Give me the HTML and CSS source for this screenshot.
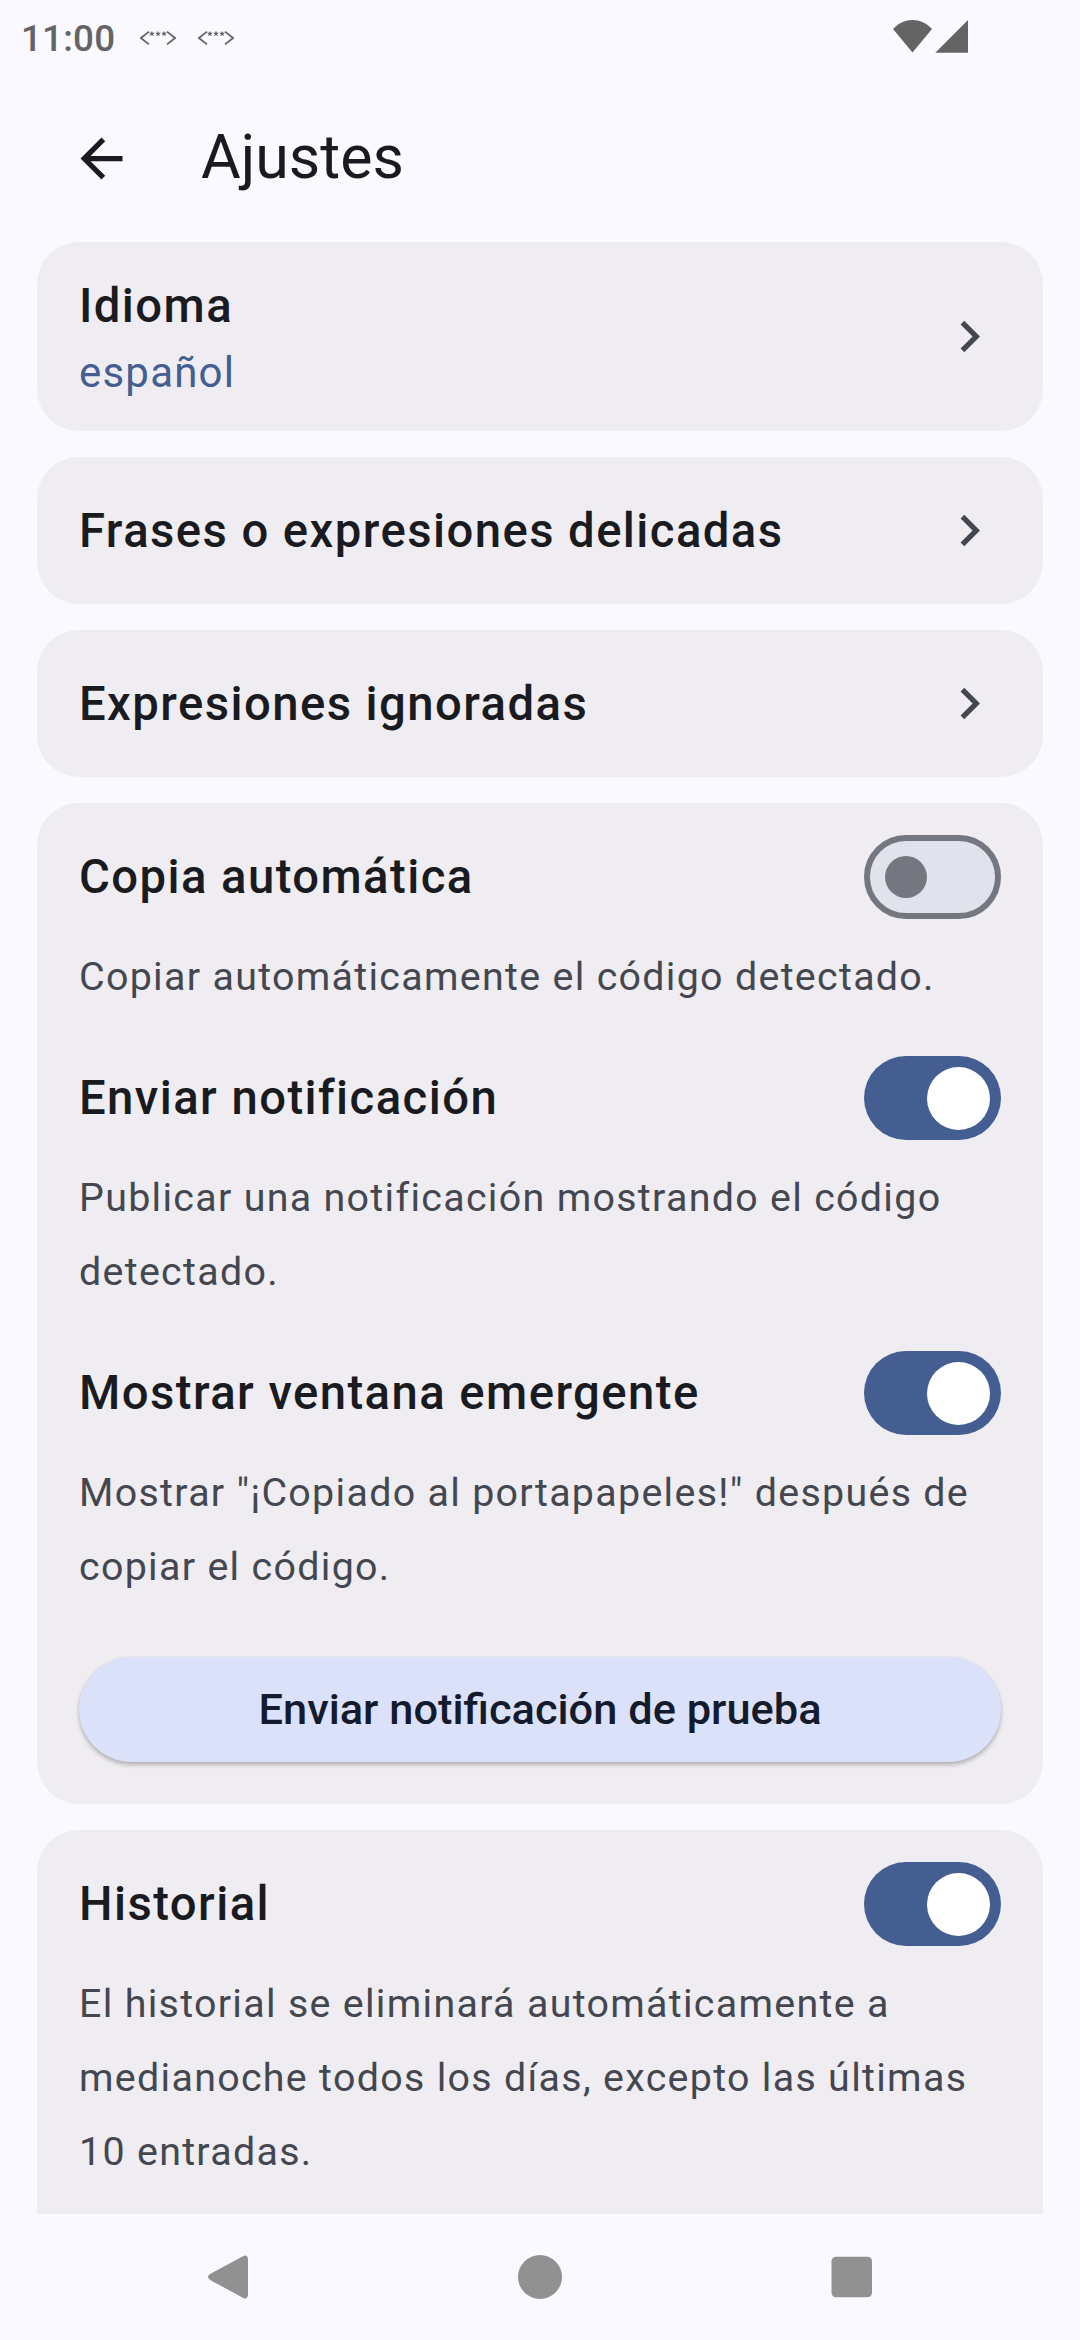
FILE: index.html
```html
<!DOCTYPE html>
<html lang="es">
<head>
<meta charset="utf-8">
<title>Ajustes</title>
<link rel="stylesheet" href="styles.css">
</head>
<body>
<svg class="defs" aria-hidden="true">
  <symbol id="chevron" viewBox="0 0 24 24"><path d="M10 6 8.59 7.41 13.17 12l-4.58 4.59L10 18l6-6z"/></symbol>
  <symbol id="star" viewBox="-10 -10 20 20"><path d="M0-10 2.6-3.2 9.5-3.1 4.1 1.3 5.9 8.1 0 4.2-5.9 8.1-4.1 1.3-9.5-3.1-2.6-3.2z"/></symbol>
  <symbol id="code" viewBox="0 0 36 14">
    <path d="M9 .7.9 7 9 13.3M27 .7 35.1 7 27 13.3" fill="none" stroke="currentColor" stroke-width="1.7"/>
    <use href="#star" x="8.900" y="-.2" width="6" height="6"/>
    <use href="#star" x="15" y="-.2" width="6" height="6"/>
    <use href="#star" x="21.100" y="-.2" width="6" height="6"/>
  </symbol>
</svg>
<div class="screen">
  <div class="status">
    <span class="clock">11:00</span>
    <svg class="notif"><use href="#code"/></svg>
    <svg class="notif"><use href="#code"/></svg>
    <svg class="signals" viewBox="0 0 75 33"><path d="M0 9C11-3 28-3 39 9L19.5 32.5z"/><path d="M42.3 32.7 75 0v32.7z"/></svg>
  </div>
  <header class="appbar">
    <svg class="back" viewBox="0 0 24 24"><path d="M20 11H7.83l5.59-5.59L12 4l-8 8 8 8 1.41-1.41L7.83 13H20z"/></svg>
    <h1 class="heading">Ajustes</h1>
  </header>
  <main class="content">
    <section class="card link tall">
      <div class="labels">
        <h2 class="title">Idioma</h2>
        <p class="value">español</p>
      </div>
      <svg class="chevron"><use href="#chevron"/></svg>
    </section>
    <section class="card link">
      <h2 class="title">Frases o expresiones delicadas</h2>
      <svg class="chevron"><use href="#chevron"/></svg>
    </section>
    <section class="card link">
      <h2 class="title">Expresiones ignoradas</h2>
      <svg class="chevron"><use href="#chevron"/></svg>
    </section>
    <section class="card group">
      <div class="setting">
        <div class="row"><h2 class="title">Copia automática</h2><span class="switch"><span class="thumb"></span></span></div>
        <p class="desc">Copiar automáticamente el código detectado.</p>
      </div>
      <div class="setting">
        <div class="row"><h2 class="title">Enviar notificación</h2><span class="switch on"><span class="thumb"></span></span></div>
        <p class="desc">Publicar una notificación mostrando el código<br>detectado.</p>
      </div>
      <div class="setting">
        <div class="row"><h2 class="title">Mostrar ventana emergente</h2><span class="switch on"><span class="thumb"></span></span></div>
        <p class="desc">Mostrar "¡Copiado al portapapeles!" después de<br>copiar el código.</p>
      </div>
      <button class="test">Enviar notificación de prueba</button>
    </section>
    <section class="card group">
      <div class="setting">
        <div class="row"><h2 class="title">Historial</h2><span class="switch on"><span class="thumb"></span></span></div>
        <p class="desc">El historial se eliminará automáticamente a<br>medianoche todos los días, excepto las últimas<br>10 entradas.</p>
      </div>
    </section>
  </main>
  <nav class="navbar">
    <svg class="key" viewBox="0 0 48 48"><path d="M37.5 4.1Q43 .2 44 6V42Q43 47.8 37.5 43.9L6.5 27.2Q1.500 24 6.500 20.800z"/></svg>
    <svg class="key" viewBox="0 0 48 48"><circle cx="24" cy="24" r="22"/></svg>
    <svg class="key" viewBox="0 0 48 48"><rect x="3.500" y="3.700" width="40.500" height="40.500" rx="4.500"/></svg>
  </nav>
</div>
</body>
</html>
```
FILE: styles.css
```css
* { box-sizing: border-box; margin: 0; padding: 0; }
body { background: #faf9ff; font-family: Roboto, sans-serif; color: #1a1b20; }
.defs { position: absolute; width: 0; height: 0; }
.screen { width: 1080px; height: 2340px; display: flex; flex-direction: column; overflow: hidden; }

.status { height: 78px; display: flex; align-items: center; padding: 0 112px 0 21px; color: #646464; fill: #646464; flex: none; }
.clock { width: 119px; font-size: 36.75px; font-weight: 500; letter-spacing: .2px; line-height: 44px; }
.notif { width: 36px; height: 14px; margin-right: 22px; margin-bottom: 2px; }
.signals { width: 75px; height: 33px; margin: 0 0 5px auto; }

.appbar { height: 164px; display: flex; align-items: center; padding: 0 70px 5px; flex: none; }
.back { width: 63px; height: 63px; fill: #1a1b20; margin-top: 2px; }
.heading { margin-left: 68px; font-size: 60.9px; font-weight: 400; line-height: 72px; }

.content { flex: 1; min-height: 0; overflow: hidden; display: flex; flex-direction: column; gap: 26px; padding: 0 37px; }
.card { flex: none; background: #efedf1; border-radius: 42px; padding: 0 42px; }
.link { height: 147px; display: flex; align-items: center; justify-content: space-between; }
.link.tall { height: 189px; }
.chevron { width: 63px; height: 63px; fill: #44474f; }
.title { font-size: 47.25px; font-weight: 500; letter-spacing: 1.43px; line-height: 66px; white-space: nowrap; }
.labels { margin-top: 5px; }
.value { font-size: 42px; letter-spacing: 1.2px; line-height: 68px; color: #445e91; }
.labels .value { margin-bottom: -2px; }

.group { padding: 32px 42px 42px; display: flex; flex-direction: column; }
.group:last-child { padding-bottom: 120px; }
.setting + .setting { margin-top: 42px; }
.row { height: 84px; display: flex; align-items: center; justify-content: space-between; }
.desc { margin-top: 21px; font-size: 39.375px; letter-spacing: 1.3125px; line-height: 74px; color: #44474f; white-space: nowrap; }

.switch { width: 137px; height: 84px; border-radius: 42px; border: 6px solid #74777f; background: #e1e2ec; display: flex; align-items: center; padding-left: 15px; }
.thumb { width: 42px; height: 42px; border-radius: 50%; background: #74777f; }
.switch.on { border: 0; background: #445e91; justify-content: flex-end; padding: 0 11px 0 0; }
.switch.on .thumb { width: 63px; height: 63px; background: #fff; }

.test { margin-top: 53px; height: 105px; border: 0; border-radius: 53px; background: #dbe1f9; color: #141b2c; font-family: inherit; font-size: 43.4px; font-weight: 500; box-shadow: 0 3px 4px rgba(0, 0, 0, .24), 0 0 3px rgba(0, 0, 0, .06); }

.navbar { flex: none; height: 126px; display: flex; align-items: center; justify-content: space-between; padding: 0 204px; }
.key { width: 48px; height: 48px; fill: #919191; }
```
